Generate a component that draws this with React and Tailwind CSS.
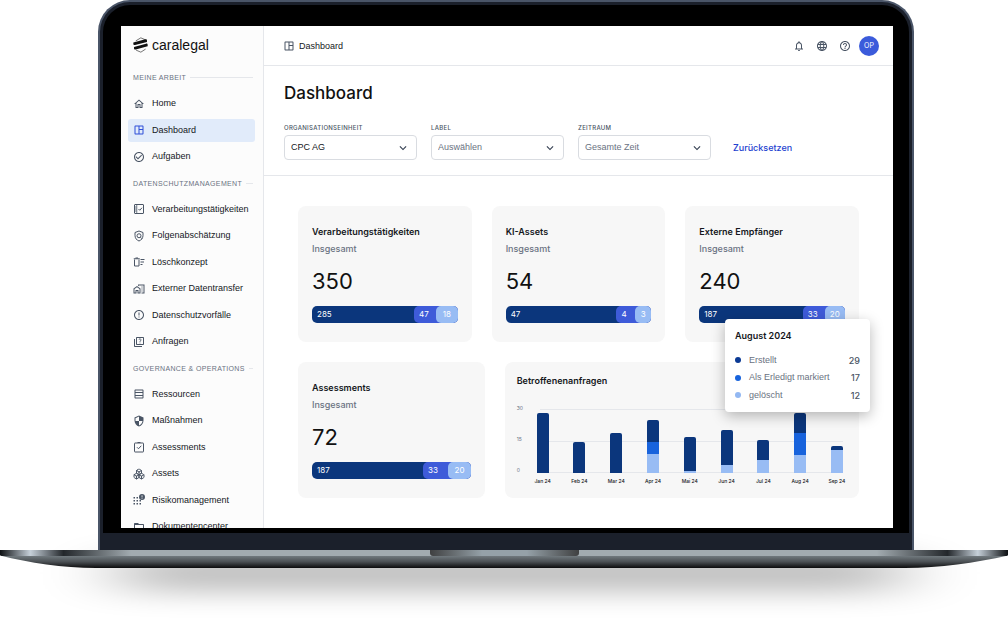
import React from 'react';
import { Boxes } from 'lucide-react';
import {
  MdOutlineHome,
  MdOutlineSpaceDashboard,
  MdCheckCircleOutline,
  MdErrorOutline,
  MdOutlineQuiz,
  MdOutlineTableRows,
  MdOutlineSecurity,
  MdFolderOpen,
  MdNotificationsNone,
  MdLanguage,
  MdHelpOutline,
  MdKeyboardArrowDown,
  MdOutlineMapsHomeWork,
} from 'react-icons/md';

const CARD = 'rounded-lg bg-[#f7f7f7]';
const CARD_TITLE = "font-['Inter',sans-serif] text-[9px] leading-3 font-semibold text-[#15171c]";

const LogoMark = () => (
  <svg viewBox="0 0 44 46" className="h-4 w-[15px]" fill="none" aria-hidden="true">
    <path d="M8 11 23 2l14 6M37 35 23 44 9 38" stroke="#333" strokeWidth="2" />
    <path d="M1 16 36 6c3-.8 5 1 5 3v5L6 23c-3 .8-5-1-5-3z" fill="#111" />
    <path d="M3 29 38 19c3-.8 5 1 5 3v5L8 36c-3 .8-5-1-5-3z" fill="#111" />
  </svg>
);

const ListCheckIcon = ({ className }) => (
  <svg viewBox="0 0 24 24" className={className} fill="none" stroke="currentColor" strokeWidth="2">
    <rect x="3" y="3" width="18" height="18" rx="1" />
    <path d="M7.500 4v16M4 8h3M4 12h3M4 16h3" strokeWidth="1.500" />
    <path d="m11 12 2.500 2.500L18 9.500" />
  </svg>
);

const ShieldSearchIcon = ({ className }) => (
  <svg viewBox="0 0 24 24" className={className} fill="none" stroke="currentColor" strokeWidth="2">
    <path d="M12 2 4 5v6c0 5 3.400 9.600 8 11 4.600-1.400 8-6 8-11V5z" />
    <circle cx="12" cy="11.500" r="4" />
    <path d="m15 14.500 3 3" />
  </svg>
);

const DeleteListIcon = ({ className }) => (
  <svg viewBox="0 0 24 24" className={className} fill="none" stroke="currentColor" strokeWidth="2">
    <path d="M3 7v13h9V7M1.500 5.500h12M5 4h5M15 7h8M15 12h7M15 17h4" />
  </svg>
);

const ClipboardCheckIcon = ({ className }) => (
  <svg viewBox="0 0 24 24" className={className} fill="none" stroke="currentColor" strokeWidth="2">
    <rect x="3" y="4" width="18" height="18" rx="1" />
    <path d="M9 3h6M8 12.500l3 3 5.500-6" />
  </svg>
);

const RiskIcon = ({ className }) => (
  <svg viewBox="0 0 24 24" className={className} fill="currentColor">
    <path d="M1 6h3v3H1zM7 6h3v3H7zM1 12h3v3H1zM7 12h3v3H7zM13 12h3v3h-3zM1 18h3v3H1zM7 18h3v3H7zM13 18h3v3h-3z" />
    <path
      fillRule="evenodd"
      d="M18 0a6 6 0 1 0 0 12 6 6 0 0 0 0-12zM17.300 2.500h1.500v4.500h-1.500zM17.300 8h1.500v1.500h-1.500z"
    />
  </svg>
);

const NAV_SECTIONS = [
  {
    title: 'Meine Arbeit',
    items: [
      { label: 'Home', icon: MdOutlineHome },
      { label: 'Dashboard', icon: MdOutlineSpaceDashboard, active: true },
      { label: 'Aufgaben', icon: MdCheckCircleOutline },
    ],
  },
  {
    title: 'Datenschutzmanagement',
    items: [
      { label: 'Verarbeitungstätigkeiten', icon: ListCheckIcon },
      { label: 'Folgenabschätzung', icon: ShieldSearchIcon },
      { label: 'Löschkonzept', icon: DeleteListIcon },
      { label: 'Externer Datentransfer', icon: MdOutlineMapsHomeWork },
      { label: 'Datenschutzvorfälle', icon: MdErrorOutline },
      { label: 'Anfragen', icon: MdOutlineQuiz },
    ],
  },
  {
    title: 'Governance & Operations',
    items: [
      { label: 'Ressourcen', icon: MdOutlineTableRows },
      { label: 'Maßnahmen', icon: MdOutlineSecurity },
      { label: 'Assessments', icon: ClipboardCheckIcon },
      { label: 'Assets', icon: Boxes },
      { label: 'Risikomanagement', icon: RiskIcon },
      { label: 'Dokumentencenter', icon: MdFolderOpen },
    ],
  },
];

const FILTERS = [
  { id: 'unit', label: 'Organisationseinheit', value: 'CPC AG', filled: true },
  { id: 'label', label: 'Label', value: 'Auswählen' },
  { id: 'period', label: 'Zeitraum', value: 'Gesamte Zeit' },
];

// middle and last are the widths of the two right-hand segments in percent
const STATS = [
  { title: 'Verarbeitungstätigkeiten', total: 350, parts: [285, 47, 18], middle: 15, last: 15 },
  { title: 'KI-Assets', total: 54, parts: [47, 4, 3], middle: 13, last: 11 },
  { title: 'Externe Empfänger', total: 240, parts: [187, 33, 20], middle: 15, last: 14 },
];

const ASSESSMENTS = { title: 'Assessments', total: 72, parts: [187, 33, 20], middle: 16, last: 14 };

// segment heights in percent of the plot
const MONTHS = [
  { name: 'Jan 24', created: 94, done: 0, deleted: 0 },
  { name: 'Feb 24', created: 48, done: 0, deleted: 0 },
  { name: 'Mar 24', created: 63, done: 0, deleted: 0 },
  { name: 'Apr 24', created: 34, done: 19, deleted: 30 },
  { name: 'Mai 24', created: 53, done: 0, deleted: 3 },
  { name: 'Jun 24', created: 54, done: 0, deleted: 13 },
  { name: 'Jul 24', created: 30, done: 0, deleted: 21 },
  { name: 'Aug 24', created: 31, done: 35, deleted: 28 },
  { name: 'Sep 24', created: 6, done: 0, deleted: 36 },
];

const LEGEND = [
  { label: 'Erstellt', value: 29, dot: 'bg-[#0b3a94]' },
  { label: 'Als Erledigt markiert', value: 17, dot: 'bg-[#1863dc]' },
  { label: 'gelöscht', value: 12, dot: 'bg-[#93b8f2]' },
];

const Sidebar = () => (
  <aside className="w-[143px] shrink-0 contain-size overflow-hidden border-r border-gray-200 bg-[#fcfcfc] pl-[7px] pr-2">
    <a href="#" className="flex h-[37px] items-center gap-1 pl-[5px] text-[14px] leading-5 text-[#111]">
      <LogoMark />
      caralegal
    </a>
    <nav>
      {NAV_SECTIONS.map((section) => (
        <div key={section.title}>
          <h2 className="my-[9px] flex items-center gap-1 pl-[5px] pr-[2px] text-[7px] leading-[11px] tracking-wider whitespace-nowrap text-gray-500 uppercase">
            {section.title}
            <span className="h-px flex-1 bg-gray-200" />
          </h2>
          <ul className="flex flex-col gap-[3px]">
            {section.items.map(({ label, icon: Icon, active }) => (
              <li key={label}>
                <a
                  href="#"
                  className={`flex items-center gap-[7px] rounded-[3px] px-[5px] py-[5px] text-[9px] leading-normal whitespace-nowrap text-[#15171c] ${active ? 'bg-[#e1ebfa]' : ''}`}
                >
                  <Icon className={`h-3 w-3 shrink-0 ${active ? 'text-[#2f4fd8]' : 'text-gray-600'}`} />
                  {label}
                </a>
              </li>
            ))}
          </ul>
        </div>
      ))}
    </nav>
  </aside>
);

const Header = () => (
  <header className="flex h-10 items-center justify-between border-b border-gray-200 pl-[19px] pr-[14px]">
    <div className="flex items-center gap-1 text-[9px] leading-3 text-[#15171c]">
      <MdOutlineSpaceDashboard className="h-3 w-3 text-gray-600" />
      Dashboard
    </div>
    <div className="flex items-center gap-2 text-gray-600">
      <div className="flex gap-[11px]">
        <button type="button" aria-label="Benachrichtigungen">
          <MdNotificationsNone className="h-3 w-3" />
        </button>
        <button type="button" aria-label="Sprache">
          <MdLanguage className="h-3 w-3" />
        </button>
        <button type="button" aria-label="Hilfe">
          <MdHelpOutline className="h-3 w-3" />
        </button>
      </div>
      <button
        type="button"
        className="flex h-5 w-5 items-center justify-center rounded-full bg-[#3b5bdb] font-['Inter',sans-serif] text-[7px] leading-2 text-white"
      >
        OP
      </button>
    </div>
  </header>
);

const Filters = () => (
  <section className="border-b border-gray-200 px-5 pt-4 pb-[15px]">
    <h1 className="font-['Inter',sans-serif] text-[17px] leading-[22px] font-medium text-[#111]">Dashboard</h1>
    <div className="mt-[19px] flex items-end gap-[14px]">
      {FILTERS.map((filter) => (
        <div key={filter.id} className="flex w-[133px] flex-col gap-[2px]">
          <label
            htmlFor={filter.id}
            className="font-['Inter',sans-serif] text-[6px] leading-[10px] font-medium tracking-wider text-gray-600 uppercase"
          >
            {filter.label}
          </label>
          <div className="grid items-center">
            <select
              id={filter.id}
              className={`col-start-1 row-start-1 h-[25px] w-full appearance-none rounded-[4px] border border-[#d9dce1] bg-white px-[6px] text-[9px] ${filter.filled ? 'text-[#15171c]' : 'text-gray-500'}`}
            >
              <option>{filter.value}</option>
            </select>
            <MdKeyboardArrowDown className="pointer-events-none col-start-1 row-start-1 mr-[7px] h-[14px] w-[14px] justify-self-end text-gray-700" />
          </div>
        </div>
      ))}
      <button
        type="button"
        className="ml-2 h-[25px] font-['Inter',sans-serif] text-[9px] leading-3 font-medium text-[#1d3fd0]"
      >
        Zurücksetzen
      </button>
    </div>
  </section>
);

const StatCard = ({ stat }) => (
  <article className={`${CARD} px-[14px] pt-5 pb-[19px] font-['Inter',sans-serif]`}>
    <h2 className={CARD_TITLE}>{stat.title}</h2>
    <p className="mt-[5px] text-[9px] leading-3 font-medium text-gray-500">Insgesamt</p>
    <p className="mt-3 text-[22px] leading-7 text-[#111]">{stat.total}</p>
    <div className="mt-[11px] flex h-[17px] overflow-hidden rounded-[5px] bg-[#0b367c] text-[8px] leading-[17px] text-white">
      <span className="flex-1 px-[5px]">{stat.parts[0]}</span>
      <span className="flex rounded-l-[5px] bg-[#3e5bd9]" style={{ width: `${stat.middle + stat.last}%` }}>
        <span className="flex-1 pl-[5px]">{stat.parts[1]}</span>
        <span
          className="rounded-l-[5px] bg-[#98bcf4] text-center"
          style={{ width: `${(stat.last / (stat.middle + stat.last)) * 100}%` }}
        >
          {stat.parts[2]}
        </span>
      </span>
    </div>
  </article>
);

const Tooltip = () => (
  <div className="absolute -top-[43px] -right-[11px] z-10 w-[145px] rounded-[4px] bg-white p-[10px] text-[9px] leading-normal shadow-[0_4px_14px_rgba(0,0,0,0.28)]">
    <h3 className="font-['Inter',sans-serif] font-semibold text-[#15171c]">August 2024</h3>
    <ul className="mt-[11px] flex flex-col gap-1">
      {LEGEND.map((entry) => (
        <li key={entry.label} className="flex items-center text-gray-500">
          <span className={`mr-2 h-[6px] w-[6px] rounded-full ${entry.dot}`} />
          {entry.label}
          <span className="ml-auto font-['Inter',sans-serif] font-medium text-gray-600">{entry.value}</span>
        </li>
      ))}
    </ul>
  </div>
);

const RequestsChart = () => (
  <article className={`${CARD} relative pt-[13px] pr-4 pl-3`}>
    <h2 className={CARD_TITLE}>Betroffenenanfragen</h2>
    <div className="mt-[17px] flex font-['Inter',sans-serif] text-[5px] leading-2">
      <div className="flex h-[70px] w-5 flex-col justify-between text-gray-500">
        <span>30</span>
        <span>15</span>
        <span>0</span>
      </div>
      <div className="flex-1 pt-[5px]">
        <div className="grid h-16">
          <div className="col-start-1 row-start-1 flex flex-col justify-between pl-[3px]">
            <span className="h-px bg-gray-200" />
            <span className="h-px bg-gray-200" />
            <span className="h-px bg-gray-200" />
          </div>
          <div className="z-0 col-start-1 row-start-1 flex items-end justify-between">
            {MONTHS.map((month) => (
              <div key={month.name} className="flex h-full w-3 flex-col justify-end">
                <span className="rounded-t-[2px] bg-[#0b367c]" style={{ height: `${month.created}%` }} />
                <span className="bg-[#1863dc]" style={{ height: `${month.done}%` }} />
                <span className="bg-[#98bcf4]" style={{ height: `${month.deleted}%` }} />
              </div>
            ))}
          </div>
        </div>
        <div className="mt-1 flex justify-between text-[#15171c]">
          {MONTHS.map((month) => (
            <span key={month.name} className="flex w-3 justify-center font-medium whitespace-nowrap">
              {month.name}
            </span>
          ))}
        </div>
      </div>
    </div>
    <Tooltip />
  </article>
);

const LaptopBase = () => (
  <svg viewBox="0 0 1008 73" className="block w-full overflow-visible" aria-hidden="true">
    <defs>
      <linearGradient id="edge" x1="0" x2="1" y1="0" y2="0">
        <stop offset="0" stopColor="#0c0f12" />
        <stop offset="0.03" stopColor="#c6d0d9" />
        <stop offset="0.063" stopColor="#23272b" />
        <stop offset="0.13" stopColor="#a2abb0" />
        <stop offset="0.87" stopColor="#a2abb0" />
        <stop offset="0.94" stopColor="#23272b" />
        <stop offset="0.97" stopColor="#c6d0d9" />
        <stop offset="1" stopColor="#0c0f12" />
      </linearGradient>
      <linearGradient id="belly" x1="0" x2="0" y1="0" y2="1">
        <stop offset="0" stopColor="#747d82" />
        <stop offset="0.5" stopColor="#4b5054" />
        <stop offset="1" stopColor="#0b0b0c" />
      </linearGradient>
      <linearGradient id="notch" x1="0" x2="1" y1="0" y2="0">
        <stop offset="0" stopColor="#3f4041" />
        <stop offset="0.35" stopColor="#95a1a8" />
        <stop offset="0.65" stopColor="#95a1a8" />
        <stop offset="1" stopColor="#3f4041" />
      </linearGradient>
      <filter id="soft" x="-20%" y="-150%" width="140%" height="400%">
        <feGaussianBlur stdDeviation="40 13" />
      </filter>
    </defs>
    <rect x="120" y="4" width="780" height="38" fill="#000" opacity="0.25" filter="url(#soft)" />
    <path d="M0 5.500H1008C975 13 940 18 905 18H96C62 18 30 13 0 5.500z" fill="url(#belly)" />
    <path d="M0 0h1008v4.500q0 1.500-2 1.500H2q-2 0-2-1.500z" fill="url(#edge)" />
    <path d="M430 0h149v3q0 3-3 3H433q-3 0-3-3z" fill="url(#notch)" />
  </svg>
);

const App = () => (
  <div className="overflow-hidden bg-white font-['Liberation_Sans',Arial,sans-serif]">
    <div className="relative z-10 mr-[94px] ml-[98px] rounded-t-[32px] bg-[#4a5568] px-[2px] pt-[2px]">
      <div className="rounded-t-[30px] bg-[#1b202b] px-[3px] pt-[3px] pb-[17px]">
        <div className="rounded-t-[27px] bg-black pt-[21px] pr-4 pb-[5px] pl-[18px]">
          <div className="flex bg-white">
            <Sidebar />
            <main className="min-w-0 flex-1">
              <Header />
              <Filters />
              <div className="flex flex-col gap-5 px-[34px] py-[30px]">
                <div className="grid grid-cols-3 gap-5">
                  {STATS.map((stat) => (
                    <StatCard key={stat.title} stat={stat} />
                  ))}
                </div>
                <div className="grid grid-cols-[187fr_355fr] gap-5">
                  <StatCard stat={ASSESSMENTS} />
                  <RequestsChart />
                </div>
              </div>
            </main>
          </div>
        </div>
      </div>
    </div>
    <LaptopBase />
  </div>
);

export default App;
